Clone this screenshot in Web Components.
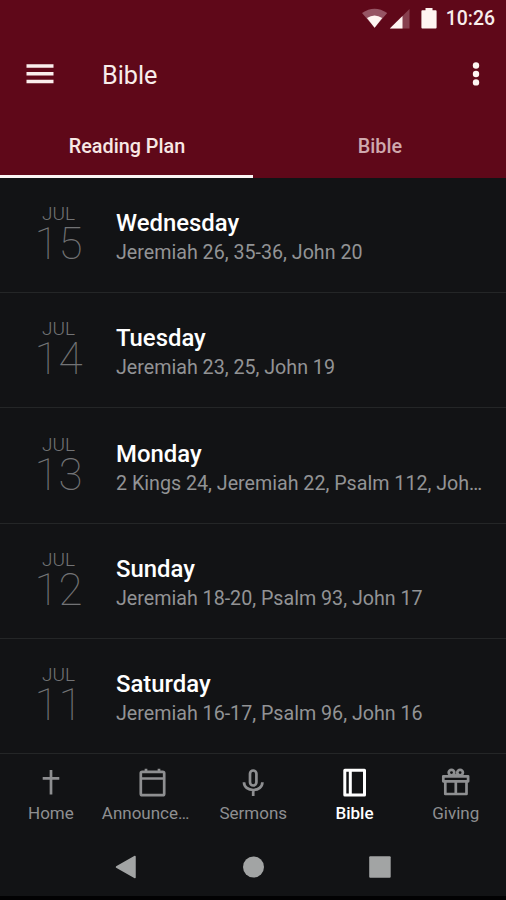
<!DOCTYPE html>
<html lang="en">
<head>
<meta charset="utf-8">
<title>Bible</title>
<style>
    body {
        margin: 0;
        background: #121315;
        font-family: Roboto, "Liberation Sans", sans-serif;
    }
</style>
</head>
<body>
<x-bible-app></x-bible-app>
<script>
{
    const render = () => {
        return `
            <style>
                :host {
                    display: flex;
                    align-items: center;
                    justify-content: flex-end;
                    height: 37px;
                    padding-right: 11px;
                    box-sizing: border-box;
                    color: #f8edeb;
                    font-size: 19.4px;
                    font-weight: 500;
                }
                svg { display: block; }
                .battery { margin: 0 9px 0 11px; }
            </style>
            <svg width="48" height="22" viewBox="0 0 48 22">
                <path d="M0 5Q12.500 -3.500 25.200 5L12.600 19.800Z" fill="#965564"/>
                <path d="M5 10Q12.500 5 20.200 10L12.600 19.800Z" fill="#fff5f2"/>
                <path d="M27.800 20.500L47.500 1V20.500Z" fill="#87404f"/>
                <path d="M27.800 20.500L40.500 8V20.500Z" fill="#fff5f2"/>
            </svg>
            <svg class="battery" width="16" height="22" viewBox="0 0 16 22">
                <path d="M4.500 0h7v2.300h3.200q.9 0 .9.900v16.400q0 .9-.9.900H1.300q-.9 0-.9-.9V3.200q0-.9.900-.9h3.200z" fill="#fff5f2"/>
            </svg>
            <span>10:26</span>
        `;
    };

    window.customElements.define('x-status-bar', class extends HTMLElement {
        constructor() {
            super();
            this.attachShadow({ mode: 'open' }).innerHTML = render();
        }
    });
}

{
    const render = () => {
        return `
            <style>
                :host {
                    display: flex;
                    align-items: center;
                    box-sizing: border-box;
                    height: 76px;
                    padding: 0 25px 2px 26px;
                    color: #f8edeb;
                    font-size: 25.2px;
                }
                svg { display: block; }
                .title { flex: 1; margin: 2px 0 0 48px; }
            </style>
            <svg width="28" height="20" viewBox="0 0 28 20" fill="#fbeeed">
                <path d="M.500 .300h27v3.400H.500zM.500 8h27v3.400H.500zM.500 15.800h27v3.400H.500z"/>
            </svg>
            <span class="title"><slot></slot></span>
            <svg width="10" height="26" viewBox="0 0 10 26" fill="#fff5f2">
                <circle cx="5" cy="4.500" r="3.200"/><circle cx="5" cy="13" r="3.200"/><circle cx="5" cy="21.400" r="3.200"/>
            </svg>
        `;
    };

    window.customElements.define('x-app-bar', class extends HTMLElement {
        constructor() {
            super();
            this.attachShadow({ mode: 'open' }).innerHTML = render();
        }
    });
}

{
    const render = () => {
        return `
            <style>
                :host {
                    flex: 1;
                    display: flex;
                    align-items: center;
                    justify-content: center;
                    box-sizing: border-box;
                    height: 65px;
                    padding: 4px 0 0 1px;
                    border-bottom: 3px solid transparent;
                    color: #cfa9ae;
                    font-size: 19.8px;
                    font-weight: 500;
                }
                :host([active]) {
                    color: #f8e8e5;
                    border-color: #fbf5f4;
                }
            </style>
            <slot></slot>
        `;
    };

    window.customElements.define('x-tab', class extends HTMLElement {
        constructor() {
            super();
            this.attachShadow({ mode: 'open' }).innerHTML = render();
        }
    });
}

{
    const render = ({ month, day, title }) => {
        return `
            <style>
                :host {
                    display: flex;
                    box-sizing: border-box;
                    height: 115.2px;
                    padding: 27.2px 22px 0 0;
                    border-bottom: 1px solid #242627;
                }
                .date {
                    flex: none;
                    width: 116px;
                    padding-left: 1px;
                    box-sizing: border-box;
                    text-align: center;
                    color: #727375;
                }
                .month {
                    font-size: 19px;
                    line-height: 18px;
                    font-weight: 300;
                }
                .day {
                    font-size: 44px;
                    line-height: 42px;
                    font-weight: 100;
                }
                .text { flex: 1; min-width: 0; }
                .title {
                    color: #fff;
                    font-size: 23.9px;
                    line-height: 36px;
                    font-weight: 500;
                }
                .passages {
                    color: #929395;
                    font-size: 19.66px;
                    line-height: 23px;
                    white-space: nowrap;
                    overflow: hidden;
                    text-overflow: ellipsis;
                }
            </style>
            <div class="date">
                <div class="month">${month}</div>
                <div class="day">${day}</div>
            </div>
            <div class="text">
                <div class="title">${title}</div>
                <div class="passages"><slot></slot></div>
            </div>
        `;
    };

    window.customElements.define('x-reading', class extends HTMLElement {
        constructor() {
            super();
            this.attachShadow({ mode: 'open' }).innerHTML = render({
                month: this.getAttribute('month'),
                day: this.getAttribute('day'),
                title: this.getAttribute('weekday')
            });
        }
    });
}

{
    const icons = {
        cross: '<path d="M15 3v24.500M6.700 11.300h16.600"/>',
        calendar: '<rect x="3.800" y="4.800" width="23.400" height="23.400" rx="1.500"/><path d="M3.800 11.500h23.400M9 1.800v4M22 1.800v4"/>',
        mic: '<rect x="12" y="3.500" width="6.400" height="15" rx="3.200"/><path d="M6 15.300c0 4.600 4 7.700 9.200 7.700s9.200-3.100 9.200-7.700M15.200 23v6"/>',
        book: '<path d="M5.800 3.300h19.700v24.700H5.800zM11.300 3.300v24.700" stroke-width="3"/>',
        gift: '<path d="M3.300 9.300h24.800v5H3.300zM5.300 14.300h21.200v12.700H5.300zM15.800 14.300v12.700M15.800 9.300L13.500 6.500M15.800 9.300L18.100 6.500"/><circle cx="11.500" cy="5.600" r="2.800"/><circle cx="20.100" cy="5.600" r="2.800"/>'
    };

    const render = (icon) => {
        return `
            <style>
                :host {
                    flex: 1;
                    min-width: 0;
                    color: #8e8f91;
                    text-align: center;
                    font-size: 17px;
                }
                :host([active]) { color: #fff; font-weight: 500; }
                svg { display: block; margin: 0 auto; }
                .label {
                    line-height: 29px;
                    padding-left: .6px;
                    white-space: nowrap;
                    overflow: hidden;
                    text-overflow: ellipsis;
                }
            </style>
            <svg width="30" height="32" viewBox="0 0 30 32" fill="none" stroke="currentColor" stroke-width="2.700" stroke-linejoin="round">${icons[icon]}</svg>
            <div class="label"><slot></slot></div>
        `;
    };

    window.customElements.define('x-nav-item', class extends HTMLElement {
        constructor() {
            super();
            this.attachShadow({ mode: 'open' }).innerHTML = render(this.getAttribute('icon'));
        }
    });
}

{
    const render = () => {
        return `
            <style>
                :host {
                    display: flex;
                    justify-content: center;
                    gap: 103px;
                    padding-top: 25px;
                }
                svg { display: block; fill: #a2a4a4; }
            </style>
            <svg width="24" height="26" viewBox="0 0 24 26"><path d="M2.500 13L21 2.500v21z" stroke="#a2a4a4" stroke-width="1.500" stroke-linejoin="round"/></svg>
            <svg width="24" height="26" viewBox="0 0 24 26"><circle cx="12.500" cy="13" r="10.500"/></svg>
            <svg width="24" height="26" viewBox="0 0 24 26"><rect x="1.200" y="2.300" width="21.500" height="21.500" rx="1"/></svg>
        `;
    };

    window.customElements.define('x-system-nav', class extends HTMLElement {
        constructor() {
            super();
            this.attachShadow({ mode: 'open' }).innerHTML = render();
        }
    });
}

{
    const readings = [
        { day: 15, weekday: 'Wednesday', passages: 'Jeremiah 26, 35-36, John 20' },
        { day: 14, weekday: 'Tuesday', passages: 'Jeremiah 23, 25, John 19' },
        { day: 13, weekday: 'Monday', passages: '2 Kings 24, Jeremiah 22, Psalm 112, John 18' },
        { day: 12, weekday: 'Sunday', passages: 'Jeremiah 18-20, Psalm 93, John 17' },
        { day: 11, weekday: 'Saturday', passages: 'Jeremiah 16-17, Psalm 96, John 16' }
    ];

    const render = () => {
        return `
            <style>
                :host {
                    display: flex;
                    flex-direction: column;
                    box-sizing: border-box;
                    height: 900px;
                    overflow: hidden;
                    background: #121315;
                    border-bottom: 4px solid #020203;
                }
                header { background: #5f0819; }
                .tabs, nav { display: flex; }
                main { height: 576px; }
                nav { padding-top: 13px; height: 75px; box-sizing: border-box; }
            </style>
            <header>
                <x-status-bar></x-status-bar>
                <x-app-bar>Bible</x-app-bar>
                <div class="tabs">
                    <x-tab active>Reading Plan</x-tab>
                    <x-tab>Bible</x-tab>
                </div>
            </header>
            <main>
                ${readings.map(item => (`
                    <x-reading month="JUL" day="${item.day}" weekday="${item.weekday}">${item.passages}</x-reading>
                `)).join('')}
            </main>
            <nav>
                <x-nav-item icon="cross">Home</x-nav-item>
                <x-nav-item icon="calendar">Announcements</x-nav-item>
                <x-nav-item icon="mic">Sermons</x-nav-item>
                <x-nav-item icon="book" active>Bible</x-nav-item>
                <x-nav-item icon="gift">Giving</x-nav-item>
            </nav>
            <x-system-nav></x-system-nav>
        `;
    };

    window.customElements.define('x-bible-app', class extends HTMLElement {
        constructor() {
            super();
            this.attachShadow({ mode: 'open' }).innerHTML = render();
        }
    });
}
</script>
</body>
</html>
